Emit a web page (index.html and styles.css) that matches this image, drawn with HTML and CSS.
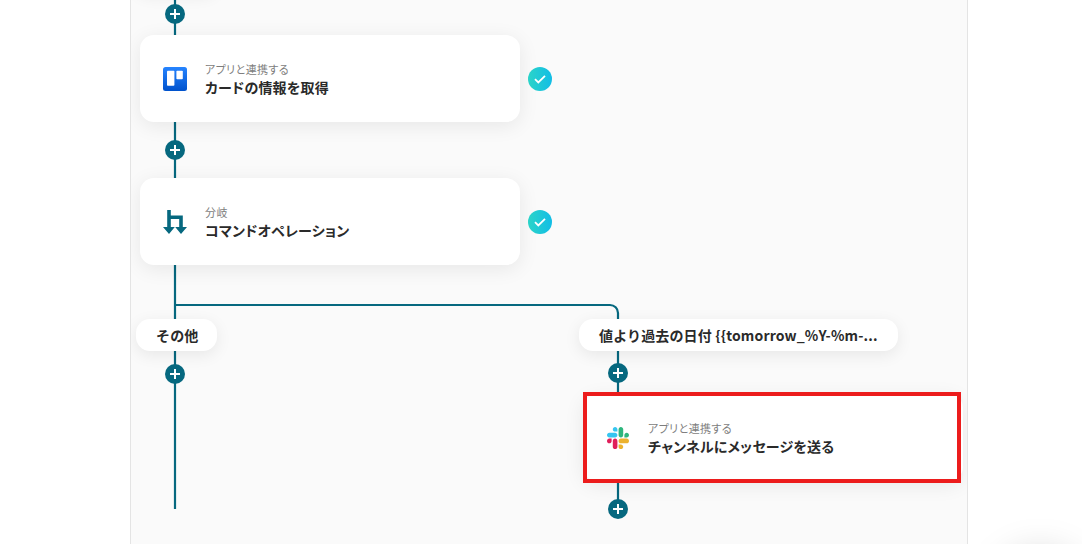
FILE: index.html
```html
<!DOCTYPE html>
<html lang="ja">
<head>
  <meta charset="UTF-8">
  <meta name="viewport" content="width=device-width, initial-scale=1.0">
  <title>フローボット</title>
  <link rel="stylesheet" href="styles.css">
</head>
<body>
  <div class="canvas">
    <!-- connectors -->
    <svg class="lines" width="838" height="544" viewBox="130 0 838 544" fill="none">
      <path d="M175 -10V509"/>
      <path d="M175 305H610a8 8 0 0 1 8 8V509"/>
    </svg>

    <div class="pill pill-top"></div>

    <button class="add add-1"><span></span></button>
    <div class="card card-trello">
      <svg class="icon" width="24" height="24" viewBox="0 0 24 24">
        <defs>
          <linearGradient id="trelloFill" x1="0" y1="0" x2="0" y2="1">
            <stop offset="0" stop-color="#2684ff"/>
            <stop offset="1" stop-color="#0052cc"/>
          </linearGradient>
        </defs>
        <rect width="24" height="24" rx="2.5" fill="url(#trelloFill)"/>
        <rect x="4" y="3.7" width="7.4" height="15" rx="0.8" fill="#fff"/>
        <rect x="13.4" y="3.7" width="6.4" height="8.6" rx="0.8" fill="#fff"/>
      </svg>
      <div class="card-text">
        <p class="card-label">アプリと連携する</p>
        <p class="card-title">カードの情報を取得</p>
      </div>
    </div>
    <div class="check check-1">
      <svg width="14" height="14" viewBox="0 0 14 14" fill="none"><path d="M2 7.2l3.3 3.2L12 3.8"/></svg>
    </div>

    <button class="add add-2"><span></span></button>
    <div class="card card-branch">
      <svg class="icon" width="24" height="24" viewBox="0 0 24 24">
        <path d="M4.2 0H7.8V5.5H19.8V17H24L18 24L12.2 17H16.2V9H7.8V17H11.8L6 24L0 17H4.2Z" fill="#06687f"/>
      </svg>
      <div class="card-text">
        <p class="card-label">分岐</p>
        <p class="card-title">コマンドオペレーション</p>
      </div>
    </div>
    <div class="check check-2">
      <svg width="14" height="14" viewBox="0 0 14 14" fill="none"><path d="M2 7.2l3.3 3.2L12 3.8"/></svg>
    </div>

    <div class="pill pill-other">その他</div>
    <div class="pill pill-value">値より過去の日付 {{tomorrow_%Y-%m-...</div>
    <button class="add add-3"><span></span></button>
    <button class="add add-4"><span></span></button>

    <div class="card card-slack">
      <svg class="icon" width="22" height="22" viewBox="0 0 122.8 122.8">
        <path fill="#e01e5a" d="M25.8 77.6c0 7.1-5.8 12.9-12.9 12.9S0 84.7 0 77.6s5.8-12.9 12.9-12.9h12.9v12.9zM32.3 77.6c0-7.1 5.8-12.9 12.9-12.9s12.9 5.8 12.9 12.9v32.3c0 7.1-5.8 12.9-12.9 12.9s-12.9-5.8-12.9-12.9V77.6z"/>
        <path fill="#36c5f0" d="M45.2 25.8c-7.1 0-12.9-5.8-12.9-12.9S38.1 0 45.2 0s12.9 5.8 12.9 12.9v12.9H45.2zM45.2 32.3c7.1 0 12.9 5.8 12.9 12.9s-5.8 12.9-12.9 12.9H12.9C5.8 58.1 0 52.3 0 45.2s5.8-12.9 12.9-12.9h32.3z"/>
        <path fill="#2eb67d" d="M97 45.2c0-7.1 5.8-12.9 12.9-12.9s12.9 5.8 12.9 12.9-5.8 12.9-12.9 12.9H97V45.2zM90.5 45.2c0 7.1-5.8 12.9-12.9 12.9s-12.9-5.8-12.9-12.9V12.9C64.7 5.8 70.5 0 77.6 0s12.9 5.8 12.9 12.9v32.3z"/>
        <path fill="#ecb22e" d="M77.6 97c7.1 0 12.9 5.8 12.9 12.9s-5.8 12.9-12.9 12.9-12.9-5.8-12.9-12.9V97h12.9zM77.6 90.5c-7.1 0-12.9-5.8-12.9-12.9s5.8-12.9 12.9-12.9h32.3c7.1 0 12.9 5.8 12.9 12.9s-5.8 12.9-12.9 12.9H77.6z"/>
      </svg>
      <div class="card-text">
        <p class="card-label">アプリと連携する</p>
        <p class="card-title">チャンネルにメッセージを送る</p>
      </div>
    </div>
    <div class="highlight"></div>
    <button class="add add-5"><span></span></button>
  </div>

  <div class="float-button"></div>
</body>
</html>
```

FILE: styles.css
```css
html, body {
  margin: 0;
  height: 100%;
  background-color: #fff;
  overflow: hidden;
  font-family: "Noto Sans CJK JP", "Noto Sans", sans-serif;
  color: #2a2a2a;
}

.canvas {
  position: relative;
  width: 836px;
  height: 544px;
  margin-left: 130px;
  background-color: #fafafa;
  border-left: 1px solid #e4e4e4;
  border-right: 1px solid #e4e4e4;
  overflow: hidden;
}

.lines {
  position: absolute;
  top: 0;
  left: -1px;
}

.lines path {
  stroke: #06687f;
  stroke-width: 2.2;
}

/* everything below sits on the canvas, offsets are page x minus 131 */
.card {
  position: absolute;
  box-sizing: border-box;
  width: 380px;
  height: 87px;
  display: flex;
  align-items: center;
  background-color: #fff;
  border-radius: 14px;
  box-shadow: 0 4px 20px rgba(0, 0, 0, 0.08);
}

.card-trello { left: 9px; top: 35px; padding-left: 23px; }
.card-branch { left: 9px; top: 178px; padding-left: 23px; }
.card-slack { left: 452px; top: 394px; padding-left: 24px; }

.card-text {
  margin-left: 18px;
  font-feature-settings: "palt";
}

.card-slack .card-text {
  margin-left: 19px;
}

.card-label {
  margin: 0;
  font-size: 11px;
  line-height: 16px;
  letter-spacing: 0.4px;
  color: #7d7d7d;
}

.card-title {
  margin: 0;
  font-size: 14px;
  line-height: 20px;
  letter-spacing: 0.2px;
  font-weight: 700;
}

.pill {
  position: absolute;
  box-sizing: border-box;
  top: 319px;
  height: 32px;
  padding: 0 20px;
  background-color: #fff;
  border-radius: 14px;
  box-shadow: 0 4px 16px rgba(0, 0, 0, 0.08);
  font-size: 14px;
  line-height: 33px;
  letter-spacing: 0.15px;
  font-weight: 700;
  white-space: nowrap;
}

.pill-top { top: -40px; left: 5px; width: 81px; }
.pill-other { left: 5px; width: 81px; }
.pill-value { left: 448px; width: 319px; }

.add {
  position: absolute;
  width: 20px;
  height: 20px;
  padding: 0;
  border: none;
  border-radius: 50%;
  background-color: #06687f;
}

.add span {
  position: absolute;
  top: 9px;
  left: 5px;
  width: 10px;
  height: 2px;
  background-color: #fff;
}

.add span::after {
  content: "";
  position: absolute;
  top: -4px;
  left: 4px;
  width: 2px;
  height: 10px;
  background-color: #fff;
}

.add-1 { left: 34px; top: 4px; }
.add-2 { left: 34px; top: 140px; }
.add-3 { left: 34px; top: 364px; }
.add-4 { left: 477px; top: 363px; }
.add-5 { left: 477px; top: 499px; }

.check {
  position: absolute;
  left: 397px;
  width: 24px;
  height: 24px;
  display: flex;
  align-items: center;
  justify-content: center;
  border-radius: 50%;
  background: linear-gradient(90deg, #2bd4c8, #12bde6);
}

.check path {
  stroke: #fff;
  stroke-width: 1.8;
}

.check-1 { top: 67px; }
.check-2 { top: 210px; }

.highlight {
  position: absolute;
  box-sizing: border-box;
  left: 452px;
  top: 392px;
  width: 378px;
  height: 91px;
  border: 4px solid #ec1c1c;
}

.float-button {
  position: fixed;
  left: 1000px;
  top: 556px;
  width: 80px;
  height: 80px;
  border-radius: 50%;
  box-shadow: 0 0 40px rgba(0, 0, 0, 0.22);
}
```
